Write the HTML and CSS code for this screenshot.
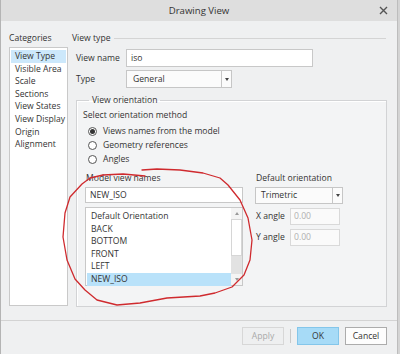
FILE: index.html
```html
<!DOCTYPE html>
<html lang="en">
<head>
    <meta charset="UTF-8">
    <title>Drawing View</title>
    <link rel="stylesheet" href="styles.css">
</head>
<body>
    <div class="window">
        <div class="titlebar">
            <span class="title">Drawing View</span>
            <svg class="close" width="9" height="9" viewBox="0 0 9 9">
                <path d="M1 1 L8 8 M8 1 L1 8" stroke="#555" stroke-width="1.4" fill="none"/>
            </svg>
        </div>
        <div class="main">
            <div class="categories">
                <div class="label">Categories</div>
                <ul class="cat-list">
                    <li class="selected">View Type</li>
                    <li>Visible Area</li>
                    <li>Scale</li>
                    <li>Sections</li>
                    <li>View States</li>
                    <li>View Display</li>
                    <li>Origin</li>
                    <li>Alignment</li>
                </ul>
            </div>
            <div class="content">
                <div class="section-head"><span>View type</span></div>
                <div class="row first">
                    <span class="row-label">View name</span>
                    <div class="input name-input">iso</div>
                </div>
                <div class="row">
                    <span class="row-label">Type</span>
                    <div class="select type-select">
                        <span class="value">General</span>
                        <span class="arrow"></span>
                    </div>
                </div>
                <fieldset class="group">
                    <legend>View orientation</legend>
                    <div class="method-label">Select orientation method</div>
                    <div class="radios">
                        <div class="radio checked"><span class="dot"></span>Views names from the model</div>
                        <div class="radio"><span class="dot"></span>Geometry references</div>
                        <div class="radio"><span class="dot"></span>Angles</div>
                    </div>
                    <div class="columns">
                        <div class="col-left">
                            <div class="field-label">Model view names</div>
                            <div class="input names-input">NEW_ISO</div>
                            <div class="listbox">
                                <ul class="view-list">
                                    <li>Default Orientation</li>
                                    <li>BACK</li>
                                    <li>BOTTOM</li>
                                    <li>FRONT</li>
                                    <li>LEFT</li>
                                    <li class="selected">NEW_ISO</li>
                                </ul>
                                <div class="scrollbar">
                                    <span class="sb-up"></span>
                                    <span class="sb-thumb"></span>
                                    <span class="sb-track"></span>
                                    <span class="sb-down"></span>
                                </div>
                            </div>
                        </div>
                        <div class="col-right">
                            <div class="field-label">Default orientation</div>
                            <div class="select orient-select">
                                <span class="value">Trimetric</span>
                                <span class="arrow"></span>
                            </div>
                            <div class="angle-row">
                                <span class="angle-label">X angle</span>
                                <div class="input disabled">0.00</div>
                            </div>
                            <div class="angle-row">
                                <span class="angle-label">Y angle</span>
                                <div class="input disabled">0.00</div>
                            </div>
                        </div>
                    </div>
                </fieldset>
            </div>
        </div>
        <div class="footer">
            <button class="btn apply" disabled>Apply</button>
            <span class="btn-sep"></span>
            <button class="btn ok">OK</button>
            <button class="btn cancel">Cancel</button>
        </div>

        <!-- hand drawn mark over the model view list -->
        <svg class="annotation" width="400" height="354" viewBox="0 0 400 354">
            <polyline fill="none" stroke="#cf2a2e" stroke-width="1.3" stroke-linejoin="round" stroke-linecap="round"
                points="142,170 157,169 180,170 203,173 220,178 228,185 240,200 248,218 252,240 250,260 244,275 232,287 215,293 200,296 167,298 140,303 117,305 97,300 85,290 75,279 67,260 63,237 65,213 70,197 82,184 90,178 103,175 123,174 145,176"/>
        </svg>
    </div>
</body>
</html>
```

FILE: styles.css
```css
* {
    box-sizing: border-box;
}
body {
    margin: 0;
    background: #d4d4d4;
    font-family: 'Open Sans', 'Noto Sans', sans-serif;
    font-size: 8.6px;
    color: #333;
}
.window {
    position: relative;
    width: 398px;
    height: 354px;
    background: #eff0f1;
    border-left: 1px solid #b4b4b4;
    border-right: 1px solid #bdbdbd;
    display: flex;
    flex-direction: column;
}
.titlebar {
    height: 21px;
    background: #dedede;
    display: flex;
    align-items: center;
    justify-content: center;
    position: relative;
}
.title {
    font-size: 9.6px;
    color: #333;
}
.close {
    position: absolute;
    right: 9px;
    top: 6px;
}
.main {
    height: 300px;
    display: flex;
    padding: 11px 10px 0 8px;
    border-bottom: 1px solid #d3d3d3;
}
.categories {
    width: 60px;
}
.label,
.section-head,
.row-label,
.method-label,
.field-label,
.angle-label {
    line-height: 13px;
    white-space: nowrap;
}
.cat-list {
    list-style: none;
    margin: 2px 0 0;
    padding: 2px 1px 0;
    height: 259px;
    background: #fff;
    border: 1px solid #c9c9c9;
}
.cat-list li {
    line-height: 12.6px;
    padding-left: 4px;
    white-space: nowrap;
}
.cat-list li.selected {
    background: #cce8fb;
}
.content {
    margin-left: 4px;
    width: 315px;
}
.section-head {
    display: flex;
    align-items: center;
}
.section-head::after {
    content: "";
    flex: 1;
    height: 1px;
    margin: 0 1px 0 4px;
    background: #d4d4d4;
}
.row {
    display: flex;
    align-items: center;
    margin-top: 3px;
    padding-left: 4px;
}
.row.first {
    margin-top: 4px;
}
.row-label {
    width: 50px;
}
.input {
    height: 18px;
    line-height: 16px;
    padding: 0 4px;
    background: #fff;
    border: 1px solid #c8c8c8;
    white-space: nowrap;
}
.name-input {
    width: 187px;
}
.select {
    display: flex;
    height: 18px;
    background: #fbfbfb;
    border: 1px solid #c6c6c6;
}
.select .value {
    flex: 1;
    line-height: 16px;
    padding-left: 6px;
}
.select .arrow {
    width: 10px;
    border-left: 1px solid #c6c6c6;
    display: flex;
    align-items: center;
    justify-content: center;
}
.select .arrow::after {
    content: "";
    border-left: 2.5px solid transparent;
    border-right: 2.5px solid transparent;
    border-top: 3px solid #444;
}
.type-select {
    width: 106px;
}
.group {
    margin: 6px 0 0 4px;
    width: 311px;
    padding: 2px 6px 20px;
    border: 1px solid #d2d3d5;
    background: #f3f4f5;
    box-shadow: inset 1px 1px 0 #fff;
}
.group legend {
    margin-left: 6px;
    padding: 0 3px;
    line-height: 13px;
}
.radios {
    margin-top: 2px;
    padding-left: 5px;
}
.radio {
    height: 14px;
    display: flex;
    align-items: center;
}
.dot {
    width: 9px;
    height: 9px;
    border: 1px solid #555;
    border-radius: 50%;
    background: #fff;
    margin-right: 6px;
    display: flex;
    align-items: center;
    justify-content: center;
}
.radio.checked .dot::after {
    content: "";
    width: 5px;
    height: 5px;
    border-radius: 50%;
    background: #333;
}
.columns {
    display: flex;
    margin-top: 6px;
}
.col-left {
    margin-left: 2px;
    width: 158px;
}
.col-left .field-label {
    padding-left: 1px;
}
.names-input {
    margin-top: 2px;
    height: 16px;
    line-height: 14px;
}
.listbox {
    position: relative;
    margin-top: 4px;
    height: 79px;
    background: #fff;
    border: 1px solid #c8c8c8;
    display: flex;
}
.view-list {
    list-style: none;
    margin: 0;
    padding: 2px 0 0 1px;
    flex: 1;
}
.view-list li {
    line-height: 12.6px;
    padding-left: 4px;
}
.view-list li.selected {
    background: #b9e2fa;
}
.scrollbar {
    width: 11px;
    display: flex;
    flex-direction: column;
    background: #f4f4f4;
}
.sb-up,
.sb-down {
    height: 11px;
    display: flex;
    align-items: center;
    justify-content: center;
}
.sb-up::after {
    content: "";
    border-left: 2.5px solid transparent;
    border-right: 2.5px solid transparent;
    border-bottom: 3px solid #999;
}
.sb-down::after {
    content: "";
    border-left: 2.5px solid transparent;
    border-right: 2.5px solid transparent;
    border-top: 3px solid #999;
}
.sb-thumb {
    height: 37px;
    background: #fff;
    border: 1px solid #d6d6d6;
}
.sb-track {
    flex: 1;
    background: #e2e2e2;
}
.col-right {
    margin-left: 12px;
    width: 88px;
}
.col-right .field-label {
    padding-left: 1px;
}
.orient-select {
    margin-top: 2px;
    height: 17px;
}
.orient-select .value {
    line-height: 15px;
    padding-left: 5px;
}
.angle-row {
    display: flex;
    align-items: center;
    margin-top: 4px;
}
.angle-label {
    width: 35px;
    padding-left: 1px;
}
.input.disabled {
    width: 50px;
    height: 17px;
    line-height: 15px;
    padding-left: 3px;
    color: #b0b0b0;
    background: #fafafa;
    border-color: #d9d9d9;
}
.footer {
    flex: 1;
    display: flex;
    align-items: center;
    justify-content: flex-end;
    padding: 0 10px 4px 0;
}
.btn {
    width: 42px;
    height: 18px;
    padding: 0;
    font-family: inherit;
    font-size: 8.6px;
    color: #333;
    background: #fdfdfd;
    border: 1px solid #acacac;
}
.btn.apply {
    color: #a9a9a9;
    background: #eeeff0;
    border-color: #d7d7d7;
}
.btn-sep {
    width: 1px;
    height: 14px;
    margin: 0 6px;
    background: #c9c9c9;
}
.btn.ok {
    background: #a7dbf7;
    border-color: #84c6ea;
    margin-right: 6px;
}
.annotation {
    position: absolute;
    left: -1px;
    top: 0;
    pointer-events: none;
}
```
